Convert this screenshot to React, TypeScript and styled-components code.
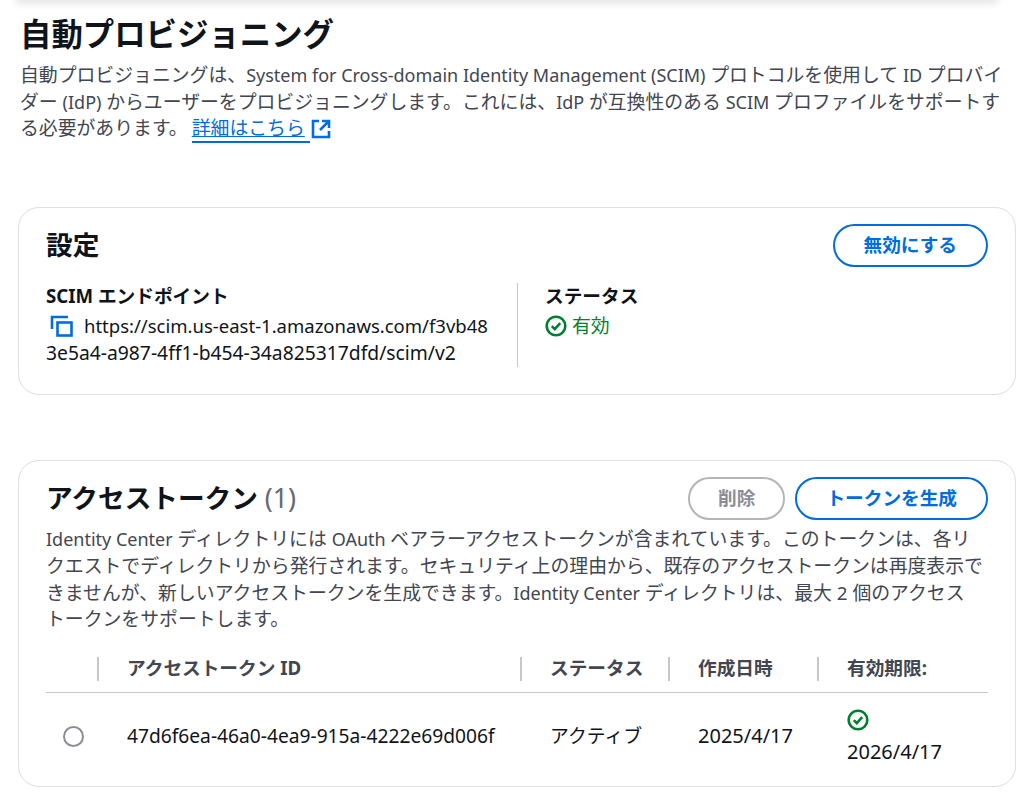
import React from 'react';
import styled, { createGlobalStyle } from 'styled-components';

const GlobalStyle = createGlobalStyle`
  html, body {
    margin: 0;
    padding: 0;
    background: #fff;
  }
  body {
    font-family: "Noto Sans", "Noto Sans CJK JP", sans-serif;
    font-size: 18.85px;
    line-height: 26.67px;
    color: #414750;
  }
`;

const TopShade = styled.div`
  height: 0;
  margin: 0 30px 0 20px;
  box-shadow: 0 0 7px 4px rgba(0, 7, 22, 0.1);
`;

const Page = styled.div`
  box-sizing: border-box;
  display: flex;
  flex-direction: column;
  height: 801px;
  overflow: hidden;
  padding: 12px 8px 0 18px;
`;

const PageHeader = styled.header`
  margin-bottom: 64px;
  padding: 0 2px;
`;

const PageTitle = styled.h1`
  margin: 0 0 6px;
  color: #0f141a;
  font-size: 31.4px;
  font-weight: 700;
  line-height: 44px;
`;

const Paragraph = styled.p`
  margin: 0;
  color: #424650;
`;

// latin runs sit slightly smaller than the japanese around them
const Latin = styled.span<{ $size?: number }>`
  font-size: ${(p) => p.$size ?? 18}px;
`;

const ExternalLink = styled.a`
  display: inline-flex;
  align-items: center;
  gap: 1px;
  margin-left: 4px;
  color: #006ce0;
`;

const LinkLabel = styled.span`
  border-bottom: 2px solid #006ce0;
  line-height: 26px;
  padding-right: 5px;
`;

const Card = styled.section`
  box-sizing: border-box;
  border: 1px solid #dedee3;
  border-radius: 21px;
  background: #fff;
  padding: 15px 27px 0 27px;
`;

const SettingsCard = styled(Card)`
  height: 188px;
  margin-bottom: 65px;
`;

const TokensCard = styled(Card)`
  height: 327px;
`;

const CardHeader = styled.div`
  display: flex;
  align-items: center;
  justify-content: space-between;
`;

const CardTitle = styled.h2`
  margin: 0;
  color: #0f141a;
  font-size: 26.67px;
  font-weight: 700;
  line-height: 44px;
`;

const Counter = styled.span`
  color: #656871;
  font-weight: 400;
`;

const ButtonRow = styled.div`
  display: flex;
  gap: 10px;
`;

const Button = styled.button<{ $disabled?: boolean }>`
  box-sizing: border-box;
  height: 43px;
  border: 2.5px solid ${(p) => (p.$disabled ? '#b4b4bb' : '#006ce0')};
  border-radius: 22px;
  background: #fff;
  color: ${(p) => (p.$disabled ? '#8c8c94' : '#006ce0')};
  font: 700 18.67px/26px "Noto Sans", "Noto Sans CJK JP", sans-serif;
  padding: 0 ${(p) => (p.$disabled ? 28 : 29)}px;
`;

const InfoGrid = styled.div`
  display: grid;
  grid-template-columns: 471px 1fr;
  margin-top: 16px;
`;

const InfoColumn = styled.div<{ $divided?: boolean }>`
  min-height: 84px;
  ${(p) => p.$divided && 'border-left: 1px solid #c6c6cd; padding-left: 27px;'}
`;

const InfoLabel = styled.div`
  margin-bottom: 3px;
  color: #0f141a;
  font-size: 18.67px;
  font-weight: 700;
`;

const Endpoint = styled.div`
  color: #0f141a;
  font-size: 18.5px;
`;

const CopyIcon = styled.svg`
  display: inline-block;
  width: 24px;
  height: 22px;
  margin: 0 10px 0 4px;
  vertical-align: -4px;
`;

const StatusValue = styled.div`
  display: flex;
  align-items: center;
  gap: 5px;
  color: #00802f;
`;

const Description = styled(Paragraph)`
  margin-top: 6px;
  margin-bottom: 13px;
`;

const TokenTable = styled.table`
  width: 942px;
  border-collapse: collapse;
  table-layout: fixed;
`;

const HeadCell = styled.th<{ $w?: number }>`
  ${(p) => p.$w && `width: ${p.$w}px;`}
  position: relative;
  box-sizing: border-box;
  height: 46px;
  border-bottom: 1px solid #c6c6cd;
  color: #424650;
  font-size: 18.67px;
  font-weight: 700;
  padding: 0 0 0 28px;
  text-align: left;
  white-space: nowrap;
  &::after {
    content: '';
    position: absolute;
    top: 11px;
    right: 0;
    width: 2px;
    height: 24px;
    background: #c6c6cd;
  }
  &:last-child::after {
    display: none;
  }
`;

const BodyCell = styled.td`
  box-sizing: border-box;
  height: 88px;
  color: #0f141a;
  padding: 0 0 0 28px;
  white-space: nowrap;
`;

const RadioCell = styled(BodyCell)`
  padding: 0 0 0 17px;
`;

const Radio = styled.span`
  display: block;
  box-sizing: border-box;
  width: 21px;
  height: 21px;
  border: 2.5px solid #8c8c94;
  border-radius: 50%;
`;

const ExpiryIcon = styled.div`
  display: flex;
  height: 25px;
  align-items: center;
  margin: 1px 0 6px;
`;

function StatusIcon() {
  return (
    <svg width="22" height="22" viewBox="0 0 22 22" fill="none" stroke="#00802f" strokeWidth="2.6">
      <circle cx="11" cy="11" r="9.3" />
      <path d="M6.8 11.2l3 3 5.4-6" />
    </svg>
  );
}

export default function App(): JSX.Element {
  return (
    <>
      <GlobalStyle />
      <TopShade />
      <Page>
        <PageHeader>
          <PageTitle>自動プロビジョニング</PageTitle>
          <Paragraph>
            自動プロビジョニングは、<Latin>System for Cross-domain Identity Management (SCIM) </Latin>プロトコルを使用して <Latin>ID </Latin>プロバイ
            <br />
            ダー <Latin>(IdP) </Latin>からユーザーをプロビジョニングします。これには、<Latin>IdP </Latin>が互換性のある <Latin>SCIM </Latin>プロファイルをサポートす
            <br />
            る必要があります。
            <ExternalLink href="#">
              <LinkLabel>詳細はこちら</LinkLabel>
              <svg width="20" height="20" viewBox="0 0 20 20" fill="none" stroke="#006ce0" strokeWidth="2.6">
                <path d="M8 2H2v16h16v-6" />
                <path d="M11 2h7v7M18 2L9 11" />
              </svg>
            </ExternalLink>
          </Paragraph>
        </PageHeader>

        <SettingsCard>
          <CardHeader>
            <CardTitle>設定</CardTitle>
            <Button>無効にする</Button>
          </CardHeader>
          <InfoGrid>
            <InfoColumn>
              <InfoLabel>SCIM エンドポイント</InfoLabel>
              <Endpoint>
                <CopyIcon viewBox="0 0 24 22" fill="none" stroke="#006ce0" strokeWidth="2.6">
                  <path d="M2 14V2h16" />
                  <rect x="7.5" y="7.5" width="14" height="13" />
                </CopyIcon>
                https://scim.us-east-1.amazonaws.com/f3vb48
                <br />
                <Latin $size={19.3}>3e5a4-a987-4ff1-b454-34a825317dfd/scim/v2</Latin>
              </Endpoint>
            </InfoColumn>
            <InfoColumn $divided>
              <InfoLabel>ステータス</InfoLabel>
              <StatusValue>
                <StatusIcon />
                有効
              </StatusValue>
            </InfoColumn>
          </InfoGrid>
        </SettingsCard>

        <TokensCard>
          <CardHeader>
            <CardTitle>
              アクセストークン <Counter>(1)</Counter>
            </CardTitle>
            <ButtonRow>
              <Button $disabled>削除</Button>
              <Button>トークンを生成</Button>
            </ButtonRow>
          </CardHeader>
          <Description>
            <Latin>Identity Center </Latin>ディレクトリには <Latin>OAuth </Latin>ベアラーアクセストークンが含まれています。このトークンは、各リ
            <br />
            クエストでディレクトリから発行されます。セキュリティ上の理由から、既存のアクセストークンは再度表示で
            <br />
            きませんが、新しいアクセストークンを生成できます。<Latin>Identity Center </Latin>ディレクトリは、最大 2 個のアクセス
            <br />
            トークンをサポートします。
          </Description>
          <TokenTable>
            <thead>
              <tr>
                <HeadCell $w={53} />
                <HeadCell $w={423}>アクセストークン ID</HeadCell>
                <HeadCell $w={148}>ステータス</HeadCell>
                <HeadCell $w={149}>作成日時</HeadCell>
                <HeadCell>有効期限:</HeadCell>
              </tr>
            </thead>
            <tbody>
              <tr>
                <RadioCell>
                  <Radio />
                </RadioCell>
                <BodyCell>
                  <Latin $size={19.2}>47d6f6ea-46a0-4ea9-915a-4222e69d006f</Latin>
                </BodyCell>
                <BodyCell>アクティブ</BodyCell>
                <BodyCell>
                  <Latin $size={20}>2025/4/17</Latin>
                </BodyCell>
                <BodyCell>
                  <ExpiryIcon>
                    <StatusIcon />
                  </ExpiryIcon>
                  <Latin $size={20}>2026/4/17</Latin>
                </BodyCell>
              </tr>
            </tbody>
          </TokenTable>
        </TokensCard>
      </Page>
    </>
  );
}
